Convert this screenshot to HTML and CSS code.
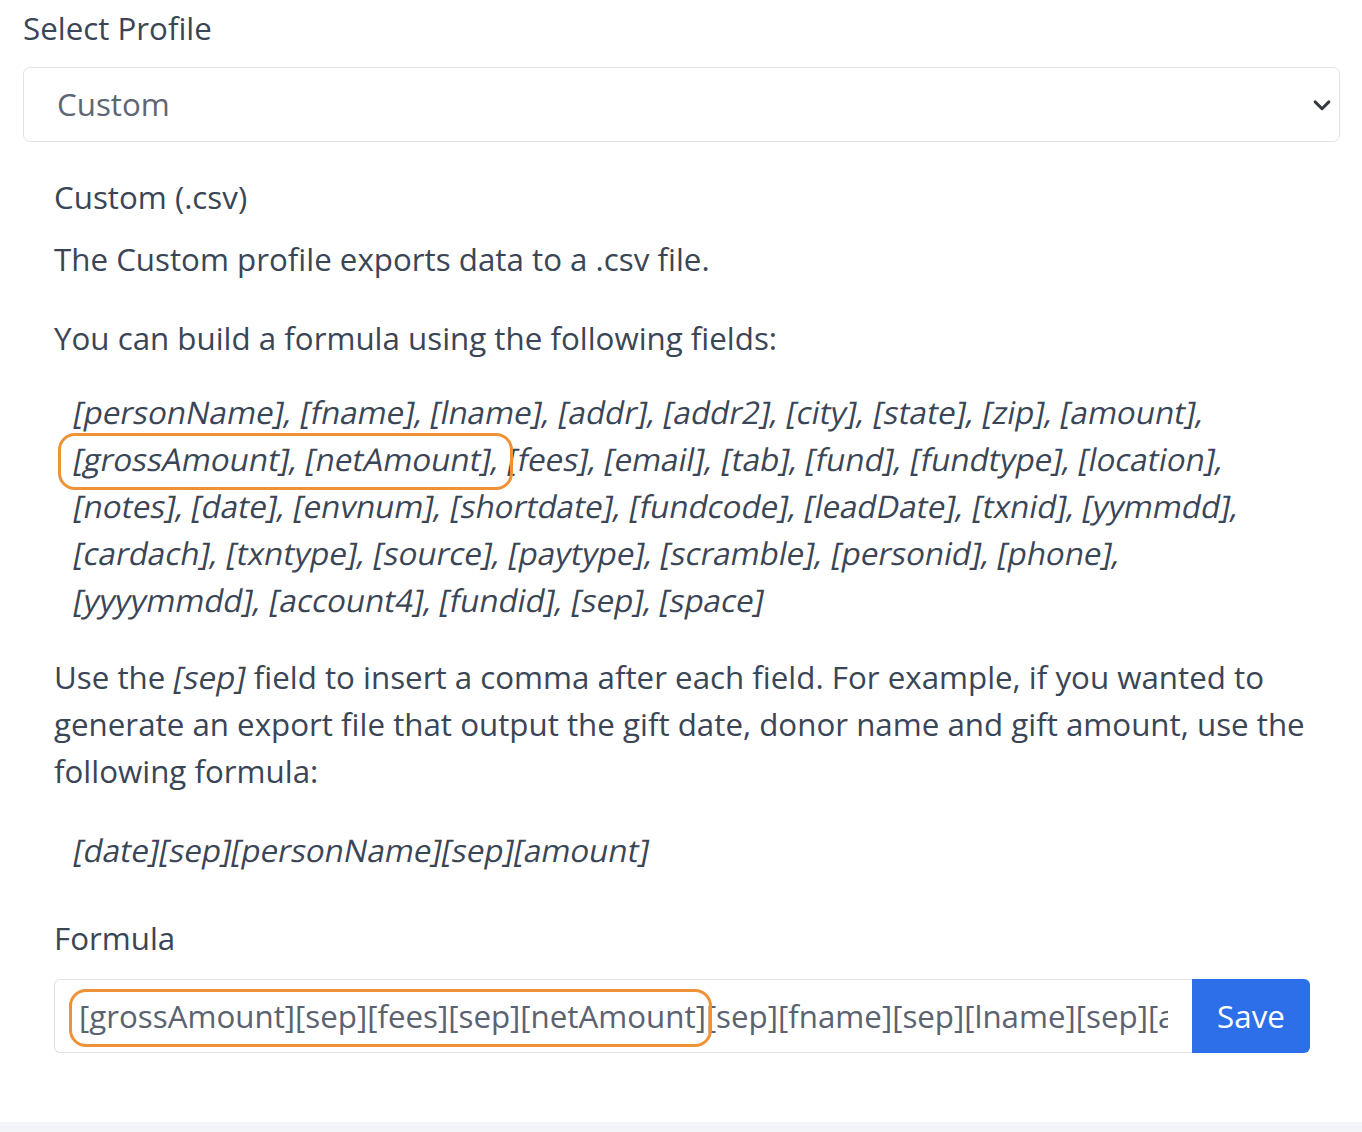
FILE: index.html
```html
<!DOCTYPE html>
<html>
<head>
<meta charset="utf-8">
<link rel="stylesheet" href="styles.css">
</head>
<body>
<div class="page">
  <label class="label">Select Profile</label>
  <div class="select">
    <span class="select-value">Custom</span>
    <svg class="chevron" viewBox="0 0 16 16"><path d="M2.5 5.5l5.5 5.5 5.5-5.5" fill="none" stroke="#343a40" stroke-width="2.4" stroke-linecap="round" stroke-linejoin="round"/></svg>
  </div>
  <div class="body">
    <p class="title">Custom (.csv)</p>
    <p>The Custom profile exports data to a .csv file.</p>
    <p class="intro">You can build a formula using the following fields:</p>
    <div class="fields-wrap">
      <p class="fields"><i>[personName],</i> <i>[fname],</i> <i>[lname],</i> <i>[addr],</i> <i>[addr2],</i> <i>[city],</i> <i>[state],</i> <i>[zip],</i> <i>[amount],</i> <i>[grossAmount],</i> <i>[netAmount],</i> <i>[fees],</i> <i>[email],</i> <i>[tab],</i> <i>[fund],</i> <i>[fundtype],</i> <i>[location],</i> <i>[notes],</i> <i>[date],</i> <i>[envnum],</i> <i>[shortdate],</i> <i>[fundcode],</i> <i>[leadDate],</i> <i>[txnid],</i> <i>[yymmdd],</i> <i>[cardach],</i> <i>[txntype],</i> <i>[source],</i> <i>[paytype],</i> <i>[scramble],</i> <i>[personid],</i> <i>[phone],</i> <i>[yyyymmdd],</i> <i>[account4],</i> <i>[fundid],</i> <i>[sep],</i> <i>[space]</i></p>
      <span class="hl"></span>
    </div>
    <p>Use the <i>[sep]</i> field to insert a comma after each field. For example, if you wanted to generate an export file that output the gift date, donor name and gift amount, use the following formula:</p>
    <p class="example"><i>[date][sep][personName][sep][amount]</i></p>
    <p class="formula-label">Formula</p>
    <div class="input-group">
      <div class="input"><span class="input-text">[grossAmount][sep][fees][sep][netAmount][sep][fname][sep][lname][sep][amount]</span></div>
      <button class="btn">Save</button>
      <span class="hl2"></span>
    </div>
  </div>
</div>
<div class="footer-band"></div>
</body>
</html>
```
FILE: styles.css
```css
html, body {
  margin: 0;
  padding: 0;
  background: #ffffff;
}
body {
  font-family: "Open Sans", "Noto Sans", sans-serif;
  color: #3a4555;
  font-size: 31.3px;
  line-height: 47px;
  height: 1132px;
  overflow: hidden;
  position: relative;
}
.page {
  padding: 4px 22px 0 23px;
}
.label {
  display: block;
  line-height: 48px;
  margin-bottom: 15px;
}
.select {
  height: 75px;
  border: 1.5px solid #dfe3e8;
  border-radius: 7px;
  display: flex;
  align-items: center;
  justify-content: space-between;
  padding: 0 7px 0 33px;
  box-sizing: border-box;
}
.select-value {
  color: #5e6673;
}
.chevron {
  width: 20px;
  height: 20px;
}
.body {
  padding: 32px 30px 0 31px;
}
.body p {
  margin: 0 0 32px;
}
.body i {
  font-style: normal;
  display: inline-block;
  transform: skewX(-11deg);
}
.body .title {
  margin-bottom: 15px;
}
.body .intro {
  margin-bottom: 27px;
}
.fields-wrap {
  position: relative;
  margin-bottom: 30px;
}
.body .fields {
  padding-left: 20px;
  margin: 0;
}
.hl {
  position: absolute;
  left: 4px;
  top: 44px;
  width: 455px;
  height: 57px;
  border: 3px solid #ef9235;
  border-radius: 17px;
  box-sizing: border-box;
  pointer-events: none;
}
.body .example {
  padding-left: 20px;
  margin-bottom: 41px;
}
.body .formula-label {
  margin-bottom: 17px;
}
.input-group {
  position: relative;
  display: flex;
  height: 74px;
}
.input {
  flex: 1;
  min-width: 0;
  border: 1.5px solid #dfe3e8;
  border-right: none;
  border-radius: 6px 0 0 6px;
  padding: 0 24px;
  display: flex;
  align-items: center;
  color: #5b6270;
}
.input-text {
  display: block;
  white-space: nowrap;
  overflow: hidden;
  min-width: 0;
}
.btn {
  width: 118px;
  border: none;
  background: #2d6fe9;
  color: #fff;
  font-family: inherit;
  font-size: 31.3px;
  border-radius: 0 6px 6px 0;
  padding: 0;
}
.hl2 {
  position: absolute;
  left: 15px;
  top: 10px;
  width: 643px;
  height: 58px;
  border: 3px solid #ef9235;
  border-radius: 17px;
  box-sizing: border-box;
  pointer-events: none;
}
.footer-band {
  position: absolute;
  left: 0;
  right: 0;
  bottom: 0;
  height: 10px;
  background: #f2f4f7;
}
```
